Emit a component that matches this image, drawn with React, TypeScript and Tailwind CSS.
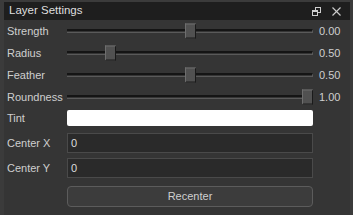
import React from 'react'

interface SliderRow {
  label: string
  value: string
  offset: number
}

const sliders: SliderRow[] = [
  { label: 'Strength', value: '0.00', offset: 118 },
  { label: 'Radius', value: '0.50', offset: 38 },
  { label: 'Feather', value: '0.50', offset: 118 },
  { label: 'Roundness', value: '1.00', offset: 235 },
]

function Slider({ offset }: { offset: number }) {
  return (
    <div className="relative flex-1 h-full flex items-center">
      <div className="w-full h-[4px] border-t-2 border-t-[#151515] border-b border-b-[#5a5a5a] border-r border-r-[#5a5a5a]" />
      <div
        className="absolute top-1/2 -translate-y-1/2 w-[11px] h-[15px] bg-[#515151] border border-t-[#6e6e6e] border-l-[#6e6e6e] border-r-[#1a1a1a] border-b-[#1a1a1a]"
        style={{ left: offset }}
      />
    </div>
  )
}

export default function App() {
  return (
    <div
      className="w-[353px] h-[215px] bg-[#3b3b3b] pl-[4px] pt-[2px] pr-[3px] text-[11px] text-[#cfcfcf]"
      style={{ fontFamily: '"Liberation Sans", Arial, sans-serif' }}
    >
      <div className="h-full bg-[#353535] flex flex-col">
        <div className="h-[18px] bg-[#1e1e1e] flex items-center justify-between pl-[5px] pr-[9px]">
          <span className="text-[11.5px] text-[#dedede]">Layer Settings</span>
          <div className="flex items-center gap-[11px]">
            <svg width="9" height="9" viewBox="0 0 9 9" fill="none" stroke="#cfcfcf" strokeWidth="1">
              <rect x="3.5" y="0.5" width="5" height="5" />
              <rect x="0.5" y="3.5" width="5" height="5" fill="#1e1e1e" />
              <line x1="0.5" y1="4.5" x2="5.5" y2="4.5" />
            </svg>
            <svg width="9" height="9" viewBox="0 0 9 9" fill="none" stroke="#cfcfcf" strokeWidth="1.1">
              <line x1="0.5" y1="0.5" x2="8.5" y2="8.5" />
              <line x1="8.5" y1="0.5" x2="0.5" y2="8.5" />
            </svg>
          </div>
        </div>

        <div className="flex flex-col pl-[3px]">
          {sliders.map((s) => (
            <div key={s.label} className="h-[22px] flex items-center">
              <span className="w-[60px] shrink-0">{s.label}</span>
              <Slider offset={s.offset} />
              <span className="w-[37px] shrink-0 pl-[6px]">{s.value}</span>
            </div>
          ))}

          <div className="h-[20px] flex items-center">
            <span className="w-[60px] shrink-0">Tint</span>
            <div className="w-[246px] h-[16px] bg-white rounded-[2px]" />
          </div>

          <div className="h-[20px] flex items-center mt-[5px]">
            <span className="w-[60px] shrink-0">Center X</span>
            <div className="w-[246px] h-[20px] bg-[#2a2a2a] border border-[#4a4a4a] flex items-center px-[3px] text-[#dcdcdc]">0</div>
          </div>

          <div className="h-[20px] flex items-center mt-[5px]">
            <span className="w-[60px] shrink-0">Center Y</span>
            <div className="w-[246px] h-[20px] bg-[#2a2a2a] border border-[#4a4a4a] flex items-center px-[3px] text-[#dcdcdc]">0</div>
          </div>

          <div className="flex mt-[8px]">
            <div className="w-[60px] shrink-0" />
            <button className="w-[246px] h-[21px] bg-[#3c3c3c] border border-[#5c5c5c] rounded-[4px] text-[#cfcfcf] text-[11px]">
              Recenter
            </button>
          </div>
        </div>
      </div>
    </div>
  )
}
